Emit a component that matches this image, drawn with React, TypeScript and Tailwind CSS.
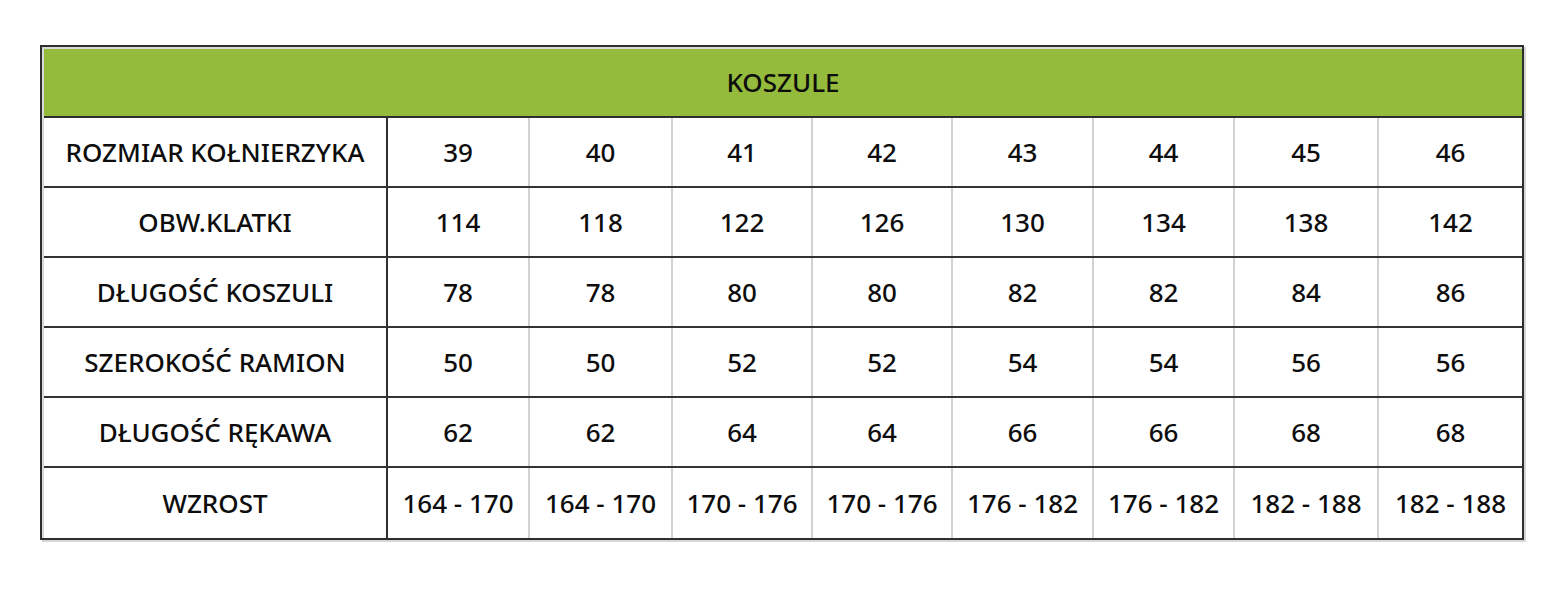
const rows: [string, string[]][] = [
  ["ROZMIAR KOŁNIERZYKA", ["39", "40", "41", "42", "43", "44", "45", "46"]],
  ["OBW.KLATKI", ["114", "118", "122", "126", "130", "134", "138", "142"]],
  ["DŁUGOŚĆ KOSZULI", ["78", "78", "80", "80", "82", "82", "84", "86"]],
  ["SZEROKOŚĆ RAMION", ["50", "50", "52", "52", "54", "54", "56", "56"]],
  ["DŁUGOŚĆ RĘKAWA", ["62", "62", "64", "64", "66", "66", "68", "68"]],
  [
    "WZROST",
    ["164 - 170", "164 - 170", "170 - 176", "170 - 176", "176 - 182", "176 - 182", "182 - 188", "182 - 188"],
  ],
];

export default function App() {
  return (
    <div
      className="w-[1550px] h-[593px] bg-white pt-[45px] pl-[40px]"
      style={{ fontFamily: '"Noto Sans", "Open Sans", sans-serif' }}
    >
      <div className="w-[1484px] border-2 border-[#2e2e2e] shadow-[2px_2px_0_0_#d6d6d6]">
        <div className="border-t-2 border-l-2 border-[#d9d9d9]">
          {/* Header */}
          <div className="h-[69px] bg-[#94bb3b] border-b-2 border-[#2e2e2e] flex items-center justify-center text-[26px] font-medium text-[#0d0d0d]">
            KOSZULE
          </div>

          {rows.map(([label, values], i) => (
            <div
              key={label}
              className={`grid grid-cols-[344px_142px_143px_140px_140px_141px_141px_144px_1fr] h-[70px] ${
                i < rows.length - 1 ? "border-b-2 border-[#333]" : ""
              }`}
            >
              <div className="flex items-center justify-center border-r-2 border-[#2e2e2e] text-[26px] font-medium text-[#0d0d0d]">
                {label}
              </div>
              {values.map((v, j) => (
                <div
                  key={j}
                  className={`flex items-center justify-center text-[26px] font-medium text-[#0d0d0d] ${
                    j < values.length - 1 ? "border-r-2 border-[#d2d2d2]" : ""
                  }`}
                >
                  {v}
                </div>
              ))}
            </div>
          ))}
        </div>
      </div>
    </div>
  );
}
